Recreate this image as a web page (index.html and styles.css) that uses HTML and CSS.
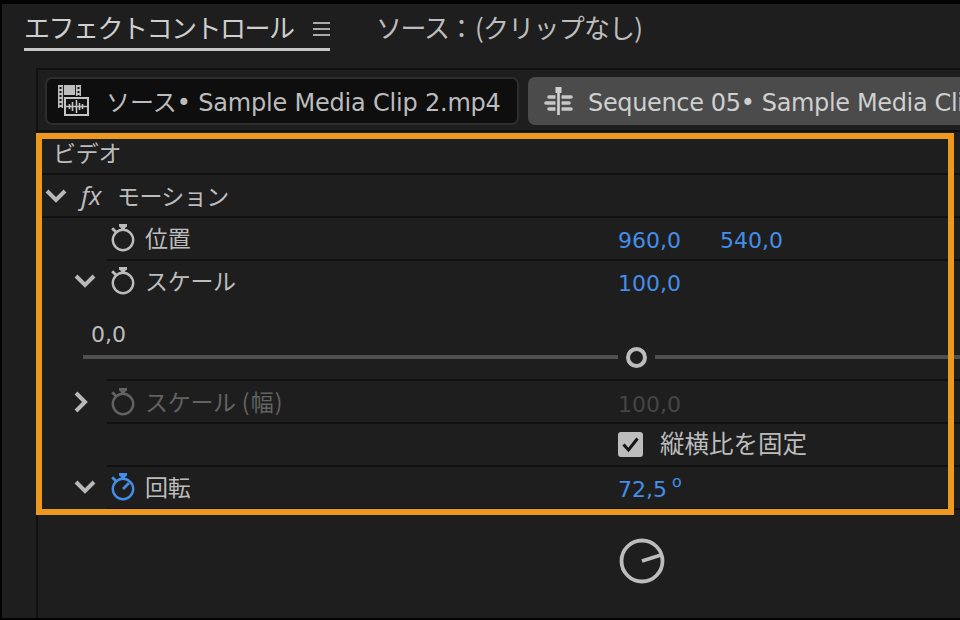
FILE: index.html
```
<!DOCTYPE html>
<html lang="ja">
<head>
  <meta charset="UTF-8" />
  <meta name="viewport" content="width=device-width, initial-scale=1.0"/>
  <title>エフェクトコントロール</title>
  <link rel="stylesheet" href="styles.css">
</head>
<body>

<!-- iconos reutilizables -->
<svg class="defs" width="0" height="0">
  <symbol id="reloj" viewBox="0 0 26 30">
    <circle cx="13" cy="17" r="10.2" fill="none" stroke="currentColor" stroke-width="2.4"/>
    <path d="M9 1h8v2.500l-2 1.500V7h-4V5L9 3.500z" fill="currentColor"/>
    <path d="M2.200 5.200l4 4" stroke="currentColor" stroke-width="2.800"/>
  </symbol>
  <symbol id="flecha" viewBox="0 0 22 16">
    <path d="M2 3l9 9 9-9" fill="none" stroke="currentColor" stroke-width="4"/>
  </symbol>
</svg>

<div class="window">
  <nav class="tabs">
    <div class="tab active"><span class="tab-name">エフェクトコントロール</span>
      <svg class="menu-icon" width="17" height="16" viewBox="0 0 17 16"><path d="M0 2h17M0 8h17M0 14h17" stroke="currentColor" stroke-width="2"/></svg>
    </div>
    <div class="tab source"><span>ソース：</span><span class="no-clip">(クリップなし)</span></div>
  </nav>

  <main class="panel">
    <div class="clips">
      <div class="clip">
        <svg width="32" height="32" viewBox="0 0 32 32">
          <path d="M0 0h23v11H6v12H0z" fill="#bdbdbd"/>
          <path d="M5.500 0v23M17.500 0v11" stroke="#222" stroke-width="1"/>
          <path d="M2.500 2v21M20.500 2v9" stroke="#111" stroke-width="2" stroke-dasharray="2 2"/>
          <path d="M6 10.500h12" stroke="#111"/>
          <rect x="7" y="13" width="23" height="17" fill="#111" stroke="#c4c4c4" stroke-width="2"/>
          <path d="M8 21.500h21M11.500 19v5M14.500 17v9M18.500 15v13M21.500 18v7M24.500 19v5" stroke="#c4c4c4" stroke-width="1.600"/>
        </svg>
        <span class="clip-jp">ソース</span><span class="clip-name">• Sample Media Clip 2.mp4</span>
      </div>
      <div class="clip selected">
        <svg width="30" height="30" viewBox="0 0 30 30">
          <path d="M5 11h6M2 17h9M5 23h6M18 11h9M18 17h7M18 23h9" stroke="#c8c8c8" stroke-width="3.600" stroke-linecap="round"/>
          <path d="M14.500 5v24" stroke="#4b4b4b" stroke-width="6"/>
          <path d="M14.500 5v24" stroke="#d2d2d2" stroke-width="2.600"/>
          <path d="M11.500 1h6v6h-2V5h-2v2h-2z" fill="#d2d2d2"/>
        </svg>
        <span class="clip-name">Sequence 05• Sample Media Cli</span>
      </div>
    </div>

    <div class="row video"><span class="jp">ビデオ</span></div>

    <div class="row motion">
      <svg class="arrow" width="22" height="16"><use href="#flecha"/></svg>
      <span class="fx">fx</span>
      <span class="jp">モーション</span>
    </div>

    <div class="row prop">
      <span class="toggle"></span>
      <div class="cell">
        <svg class="watch" width="26" height="30"><use href="#reloj"/></svg>
        <span class="label">位置</span>
        <span class="value">960,0</span><span class="value">540,0</span>
      </div>
    </div>

    <div class="row scale">
      <span class="toggle"><svg class="arrow" width="22" height="16"><use href="#flecha"/></svg></span>
      <div class="cell noline">
        <svg class="watch" width="26" height="30"><use href="#reloj"/></svg>
        <span class="label">スケール</span>
        <span class="value">100,0</span>
      </div>
    </div>

    <div class="slider">
      <span class="min">0,0</span>
      <div class="track">
        <i class="bar left"></i><i class="knob"></i><i class="bar"></i>
      </div>
    </div>

    <div class="row prop first disabled">
      <span class="toggle"><svg class="arrow closed" width="22" height="16"><use href="#flecha"/></svg></span>
      <div class="cell">
        <svg class="watch" width="26" height="30"><use href="#reloj"/></svg>
        <span class="label">スケール <span class="paren">(幅)</span></span>
        <span class="value">100,0</span>
      </div>
    </div>

    <div class="row prop">
      <span class="toggle"></span>
      <div class="cell check-cell">
        <svg class="check" width="25" height="25" viewBox="0 0 25 25"><rect width="25" height="25" rx="3" fill="#bdbdbd"/><path d="M5.500 12.500l5 5.500L19.500 6.500" fill="none" stroke="#161616" stroke-width="3"/></svg>
        <span class="check-label">縦横比を固定</span>
      </div>
    </div>

    <div class="row prop">
      <span class="toggle"><svg class="arrow" width="22" height="16"><use href="#flecha"/></svg></span>
      <div class="cell">
        <svg class="watch on" width="26" height="30" viewBox="0 0 26 30"><use href="#reloj"/><path d="M13 17l6-6" stroke="currentColor" stroke-width="2.600"/></svg>
        <span class="label">回転</span>
        <span class="value rotation">72,5 <span class="deg">º</span></span>
      </div>
    </div>

    <div class="dial">
      <svg width="46" height="46" viewBox="0 0 46 46"><circle cx="23" cy="23" r="20.500" fill="none" stroke="#bcbcbc" stroke-width="3.800"/><path d="M23 23l19-6" stroke="#bcbcbc" stroke-width="3.800"/></svg>
    </div>
  </main>
</div>

<div class="highlight"></div>

</body>
</html>
```
FILE: styles.css
```
:root {
  --bg: #1e1e1e;
  --line: #101010;
  --text: #bcbcbc;
  --blue: #448ee8;
  --orange: #ed981f;
}
* {
  box-sizing: border-box;
}
body {
  margin: 0;
  width: 960px;
  height: 620px;
  overflow: hidden;
  position: relative;
  background: var(--bg);
  color: var(--text);
  font-family: 'DejaVu Sans', sans-serif;
  font-size: 22px;
  white-space: nowrap;
}
svg {
  flex: none;
  display: block;
}
.defs {
  position: absolute;
}
.window {
  height: 620px;
  border: solid #020202;
  border-width: 4px 0 2px 2px;
  display: flex;
  flex-direction: column;
}
.tabs {
  display: flex;
  height: 64px;
  padding-left: 22px;
  font-family: 'Noto Sans CJK JP', sans-serif;
  font-size: 26px;
  line-height: 45px;
}
.tab.active {
  display: flex;
  width: 306px;
  height: 47px;
  color: #cecece;
  border-bottom: 3px solid #c8c8c8;
  justify-content: space-between;
}
.tab-name {
  letter-spacing: -1.5px;
}
.menu-icon {
  margin-top: 17px;
  color: #aaa;
}
.source {
  margin-left: 46px;
  letter-spacing: -1.4px;
}
.no-clip {
  margin-left: 2px;
  letter-spacing: -0.8px;
}
.panel {
  flex: 1;
  min-width: 0;
  margin-left: 34px;
  border: solid var(--line);
  border-width: 2px 0 0 2px;
}
.clips {
  display: flex;
  height: 62px;
  padding: 7px 0 5px 7px;
  gap: 9px;
  border-bottom: 2px solid var(--line);
}
.clip {
  flex: none;
  display: flex;
  align-items: center;
  width: 474px;
  height: 48px;
  padding-left: 11px;
  background: #0e0e0e;
  border: 2px solid #2e2e2e;
  border-radius: 7px;
  font-size: 24px;
}
.clip.selected {
  flex: 1;
  min-width: 0;
  padding-left: 14px;
  background: #4b4b4b;
  border-color: #4b4b4b;
  border-right: 0;
  border-radius: 7px 0 0 7px;
  color: #cfcfcf;
}
.clip-jp {
  margin-left: 16px;
  font-family: 'Noto Sans CJK JP', sans-serif;
  line-height: 36px;
}
.clip-name {
  padding-top: 3px;
  letter-spacing: -0.2px;
}
.selected .clip-name {
  margin-left: 14px;
  letter-spacing: -0.35px;
}
.row {
  display: flex;
  align-items: center;
  height: 43px;
}
.jp,
.label {
  font-family: 'Noto Sans CJK JP', sans-serif;
  font-size: 23px;
  letter-spacing: -0.3px;
  padding-bottom: 3px;
}
.video {
  padding: 2px 0 0 15px;
  border-bottom: 2px solid var(--line);
}
.motion {
  padding-left: 7px;
  border-bottom: 2px solid var(--line);
}
.motion .jp {
  padding-bottom: 1px;
  letter-spacing: -0.6px;
}
.arrow {
  color: #b8b8b8;
}
.toggle .arrow {
  margin-bottom: 3px;
}
.arrow.closed {
  transform: rotate(-90deg);
  margin: 1px 0 0 -4px;
}
.fx {
  width: 36px;
  margin-left: 14px;
  padding-bottom: 1px;
  font: italic 26px 'Open Sans', sans-serif;
}
.toggle {
  flex: none;
  width: 69px;
  padding-left: 36px;
}
.cell {
  flex: 1;
  min-width: 0;
  display: flex;
  align-items: center;
  height: 100%;
  padding-left: 3px;
  border-bottom: 2px solid var(--line);
}
.noline {
  border: 0;
}
.watch {
  margin-bottom: 2px;
}
.first,
.first .cell {
  height: 45px;
}
.first .cell {
  border-top: 2px solid var(--line);
}
.first .watch {
  margin-bottom: 0;
}
.first .label {
  padding-bottom: 1px;
}
.paren {
  margin-left: 1px;
  letter-spacing: 1.2px;
}
.label {
  width: 473px;
  margin-left: 9px;
}
.value {
  width: 102px;
  padding-top: 3px;
  color: var(--blue);
}
.disabled .cell {
  color: #626262;
}
.disabled .value {
  padding-top: 5px;
  color: #454545;
}
.scale .value {
  padding-top: 2px;
}
.scale .watch {
  margin-bottom: 3px;
}
.scale .label {
  padding-bottom: 5px;
}
.slider {
  height: 75px;
  padding-left: 45px;
}
.min {
  display: block;
  height: 42px;
  padding: 18px 0 0 8px;
}
.track {
  display: flex;
  align-items: center;
  height: 22px;
}
.bar {
  flex: 1;
  height: 4px;
  background: #505050;
}
.bar.left {
  flex: none;
  width: 535px;
}
.knob {
  width: 21px;
  height: 21px;
  margin: 0 8px;
  border: 4px solid #bcbcbc;
  border-radius: 50%;
}
.on {
  color: var(--blue);
}
.rotation {
  word-spacing: -2px;
}
.deg {
  font-family: 'Open Sans', sans-serif;
  font-size: 26px;
  line-height: 20px;
}
.check-cell {
  padding-left: 511px;
}
.check-label {
  margin-left: 17px;
  padding-bottom: 4px;
  font-family: 'Noto Sans CJK JP', sans-serif;
  font-size: 24.5px;
}
.dial {
  padding: 28px 0 0 581px;
}
.highlight {
  position: absolute;
  left: 36px;
  top: 133px;
  width: 918px;
  height: 382px;
  border: 6px solid var(--orange);
}
```
